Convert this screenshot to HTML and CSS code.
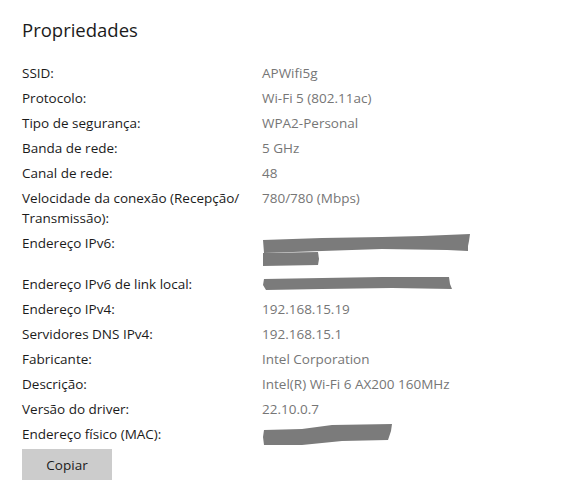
FILE: index.html
```html
<!DOCTYPE html>
<html lang="pt-BR">

<head>
    <meta charset="UTF-8">
    <meta name="viewport" content="width=device-width, initial-scale=1.0">
    <title>Propriedades</title>
    <link rel="stylesheet" href="styles.css">
</head>

<body>
    <section class="propriedades">
        <h1>Propriedades</h1>

        <dl class="lista">
            <dt>SSID:</dt>
            <dd>APWifi5g</dd>

            <dt>Protocolo:</dt>
            <dd>Wi-Fi 5 (802.11ac)</dd>

            <dt>Tipo de segurança:</dt>
            <dd>WPA2-Personal</dd>

            <dt>Banda de rede:</dt>
            <dd>5 GHz</dd>

            <dt>Canal de rede:</dt>
            <dd>48</dd>

            <dt>Velocidade da conexão (Recepção/<br>Transmissão):</dt>
            <dd>780/780 (Mbps)</dd>

            <dt>Endereço IPv6:</dt>
            <dd class="oculto">
                <!-- endereço riscado -->
                <svg width="210" height="36" viewBox="0 0 210 36">
                    <path d="M1 7 L60 5 L120 4 L160 3 L208 1 L207 8 L206 13 L206 18 L185 17 L120 16 L60 18 L2 20 Z" fill="#7b7b7b"/>
                    <path d="M1 20 L56 19 L57 26 L56 32 L1 33 Z" fill="#7b7b7b"/>
                </svg>
            </dd>

            <dt>Endereço IPv6 de link local:</dt>
            <dd class="oculto">
                <svg width="194" height="20" viewBox="0 0 194 20">
                    <path d="M2 5 L60 4 L120 3 L187 3 L188 10 L190 15 L130 14 L60 15 L4 16 L1 11 Z" fill="#7b7b7b"/>
                </svg>
            </dd>

            <dt>Endereço IPv4:</dt>
            <dd>192.168.15.19</dd>

            <dt>Servidores DNS IPv4:</dt>
            <dd>192.168.15.1</dd>

            <dt>Fabricante:</dt>
            <dd>Intel Corporation</dd>

            <dt>Descrição:</dt>
            <dd>Intel(R) Wi-Fi 6 AX200 160MHz</dd>

            <dt>Versão do driver:</dt>
            <dd>22.10.0.7</dd>

            <dt>Endereço físico (MAC):</dt>
            <dd class="oculto mac">
                <svg width="132" height="24" viewBox="0 0 132 24">
                    <path d="M2 7 L40 6 L70 2 L130 1 L129 8 L126 17 L80 18 L40 22 L2 22 L1 14 Z" fill="#7b7b7b"/>
                </svg>
            </dd>
        </dl>

        <button class="copiar">Copiar</button>
    </section>
</body>

</html>
```

FILE: styles.css
```css
body {
    font-family: 'Open Sans', 'Noto Sans', sans-serif;
    margin: 0;
    padding: 0;
    background-color: #fff;
    color: #1b1b1b;
}

.propriedades {
    padding: 16px 22px 0 22px;
}

h1 {
    font-size: 18.5px;
    font-weight: 400;
    line-height: 28px;
    margin: 0 0 19px 0;
}

.lista {
    display: grid;
    grid-template-columns: 240px 1fr;
    row-gap: 5px;
    margin: 0;
    font-size: 13.5px;
    line-height: 20px;
}

dt {
    margin: 0;
}

dd {
    margin: 0;
    color: #767676;
}

.oculto svg {
    display: block;
}

.mac {
    height: 20px;
}

.mac svg {
    margin-top: -1px;
}

.copiar {
    margin-top: 5px;
    width: 90px;
    height: 31px;
    background-color: #cccccc;
    color: #1b1b1b;
    border: none;
    font-family: inherit;
    font-size: 13.5px;
    cursor: pointer;
}
```
